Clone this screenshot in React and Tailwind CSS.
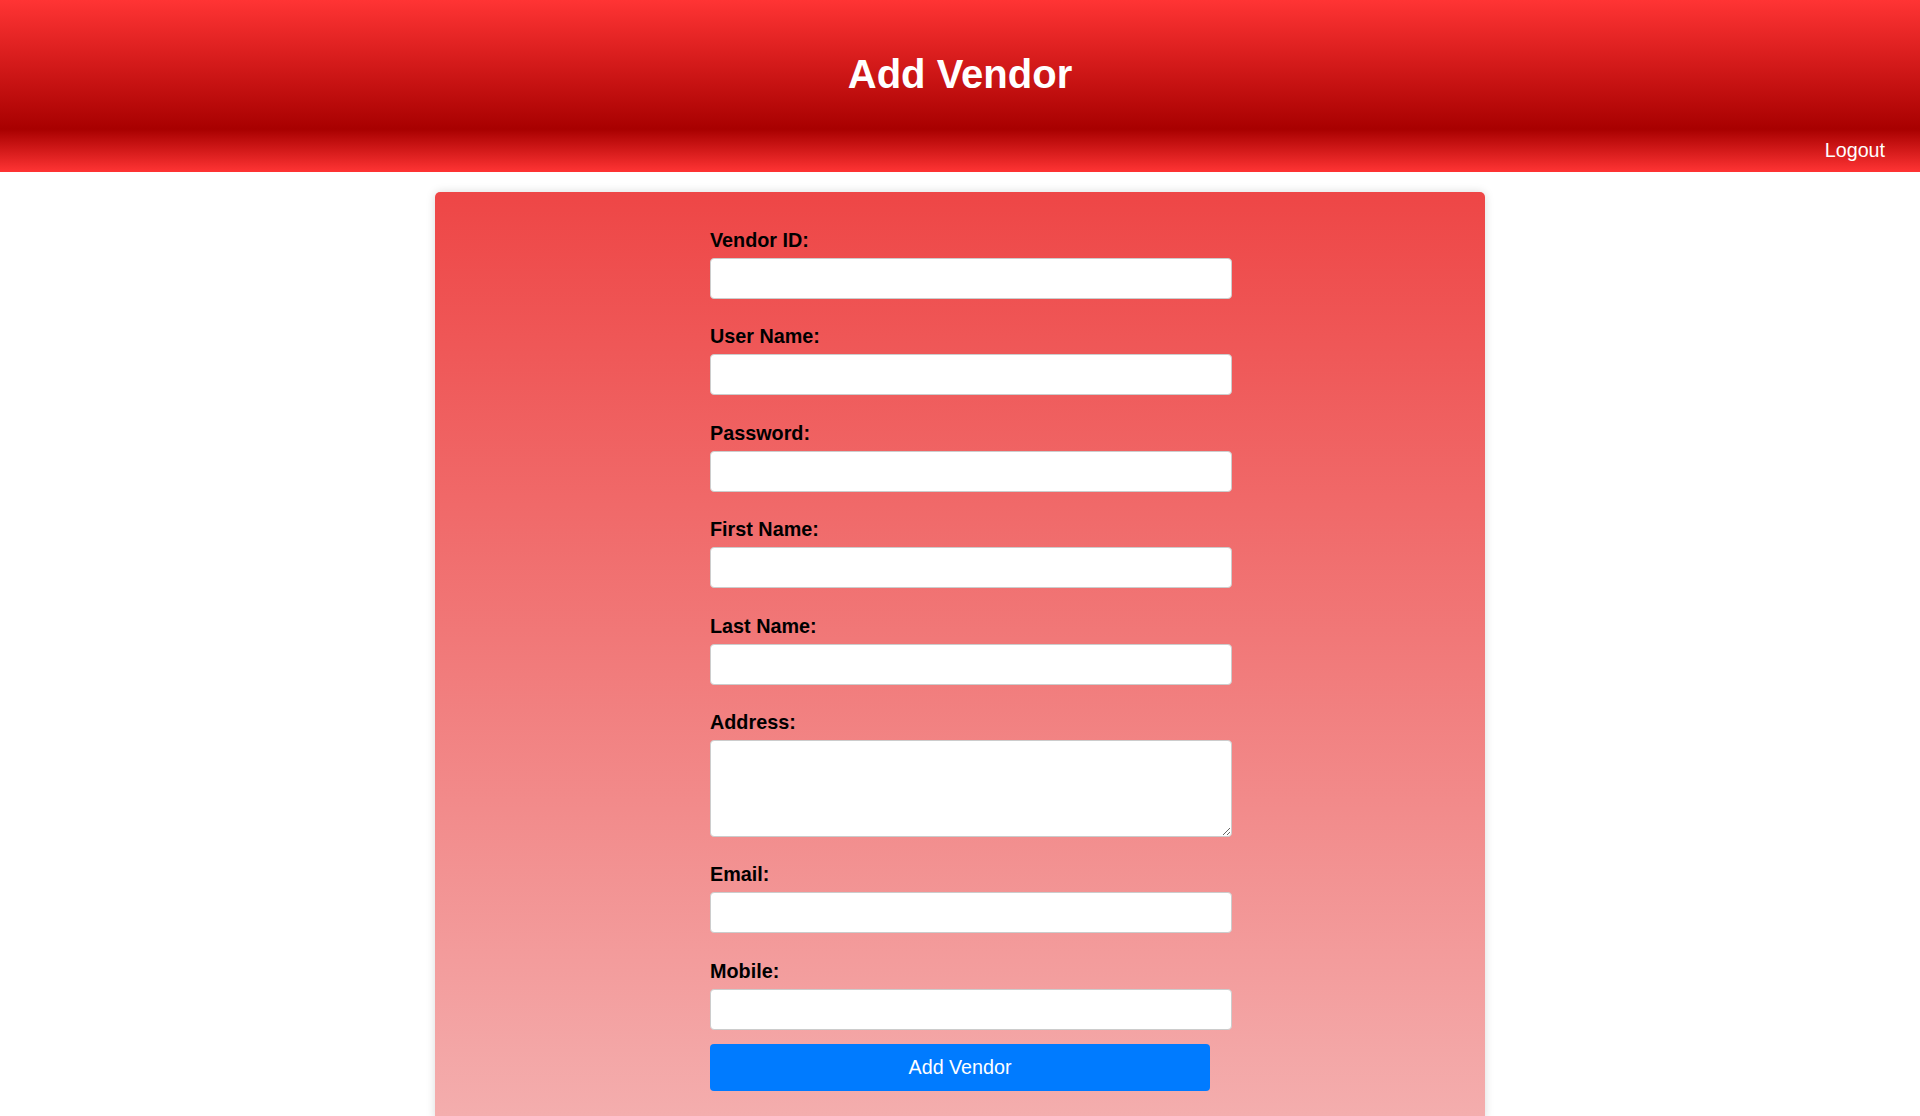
import React from "react";

const fields = [
  { label: "Vendor ID:", type: "text" },
  { label: "User Name:", type: "text" },
  { label: "Password:", type: "password" },
  { label: "First Name:", type: "text" },
  { label: "Last Name:", type: "text" },
  { label: "Address:", type: "textarea" },
  { label: "Email:", type: "email" },
  { label: "Mobile:", type: "text" },
];

export default function App() {
  return (
    <div className="min-h-screen bg-white font-['Liberation_Sans',Arial,sans-serif]">
      <header className="h-[172px] bg-[linear-gradient(to_bottom,#ff3434_0%,#a80000_75%,#ff3434_100%)] flex flex-col">
        <div className="h-[129px] pt-[51px]">
          <h1 className="text-center text-white font-bold text-[40px] leading-[46px]">Add Vendor</h1>
        </div>
        <nav className="h-[43px] flex items-center justify-end pr-[35px]">
          <a href="#" className="text-white text-[19.7px] leading-[23px]">Logout</a>
        </nav>
      </header>

      <main className="mt-[20px] flex justify-center">
        <div className="w-[1050px] rounded-[5px] bg-[linear-gradient(to_bottom,#ee4646,#f4aeae_100%)] shadow-[0_0_10px_rgba(0,0,0,0.15)] pt-[37px] pb-[30px] h-[930px]">
          <form className="w-[500px] mx-auto">
            {fields.map((f, i) => (
              <div key={f.label} className={i === fields.length - 1 ? "" : "mb-[26.4px]"}>
                <label className="block text-black font-bold text-[19.8px] leading-[22px] mb-[7px]">{f.label}</label>
                {f.type === "textarea" ? (
                  <textarea className="block w-[522px] h-[97px] bg-white border border-[#cccccc] rounded-[4px] p-[10px] text-[16px] outline-none" />
                ) : (
                  <input type={f.type} className="block w-[522px] h-[41px] bg-white border border-[#cccccc] rounded-[4px] px-[10px] text-[16px] outline-none" />
                )}
              </div>
            ))}
            <button type="button" className="block mt-[14px] w-[500px] h-[47px] bg-[#007bff] text-white rounded-[4px] text-[19.7px] leading-[23px]">Add Vendor</button>
          </form>
        </div>
      </main>
    </div>
  );
}
